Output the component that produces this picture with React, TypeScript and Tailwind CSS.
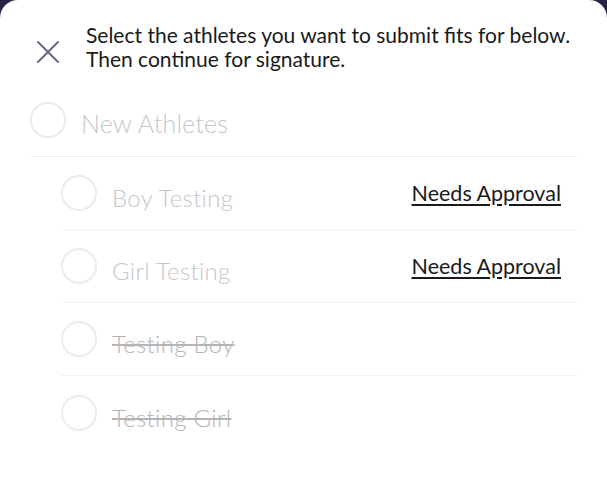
const athletes = [
  { name: "Boy Testing", status: "Needs Approval", removed: false },
  { name: "Girl Testing", status: "Needs Approval", removed: false },
  { name: "Testing Boy", status: null, removed: true },
  { name: "Testing Girl", status: null, removed: true },
];

function Radio() {
  return (
    <span className="block size-[36px] shrink-0 rounded-full border-2 border-[#ececec] bg-white" />
  );
}

export default function App() {
  return (
    <div className="h-[482px] w-[607px] bg-[#2b2340] font-['Lato',sans-serif]">
      <div className="h-full rounded-t-[18px] bg-white">
        {/* Header */}
        <div className="flex items-start gap-[27px] pl-[37px] pr-4 pt-[23px]">
          <button aria-label="Close" className="mt-[18px] shrink-0 text-[#6e6180]">
            <svg width="22" height="22" viewBox="0 0 22 22" fill="none" stroke="currentColor" strokeWidth="1.8" strokeLinecap="round">
              <path d="M1 1 21 21M21 1 1 21" />
            </svg>
          </button>
          <p className="text-[21px] leading-[24px] text-[#1a1a1a]">
            Select the athletes you want to submit fits for below.
            <br />
            Then continue for signature.
          </p>
        </div>

        {/* Group */}
        <div className="mx-[30px] mt-[12px]">
          <div className="flex h-[74px] items-center gap-[15px] border-b border-[#f1f1f1]">
            <Radio />
            <span className="mt-[8px] text-[25px] font-light tracking-[0.2px] text-[#c6c6c6]">
              New Athletes
            </span>
          </div>

          <ul className="ml-[31px]">
            {athletes.map((a, i) => (
              <li
                key={a.name}
                className={`flex h-[73px] items-center gap-[15px] pr-4 ${
                  i < athletes.length - 1 ? "border-b border-[#f1f1f1]" : ""
                }`}
              >
                <Radio />
                <span
                  className={
                    a.removed
                      ? "mt-[10px] text-[24px] font-light tracking-[0.3px] text-[#b4b4b4] line-through"
                      : "mt-[10px] text-[24px] font-light tracking-[0.3px] text-[#c6c6c6]"
                  }
                >
                  {a.name}
                </span>
                {a.status && (
                  <span className="ml-auto text-[21.5px] text-[#1a1a1a] underline underline-offset-[3px]">
                    {a.status}
                  </span>
                )}
              </li>
            ))}
          </ul>
        </div>
      </div>
    </div>
  );
}
